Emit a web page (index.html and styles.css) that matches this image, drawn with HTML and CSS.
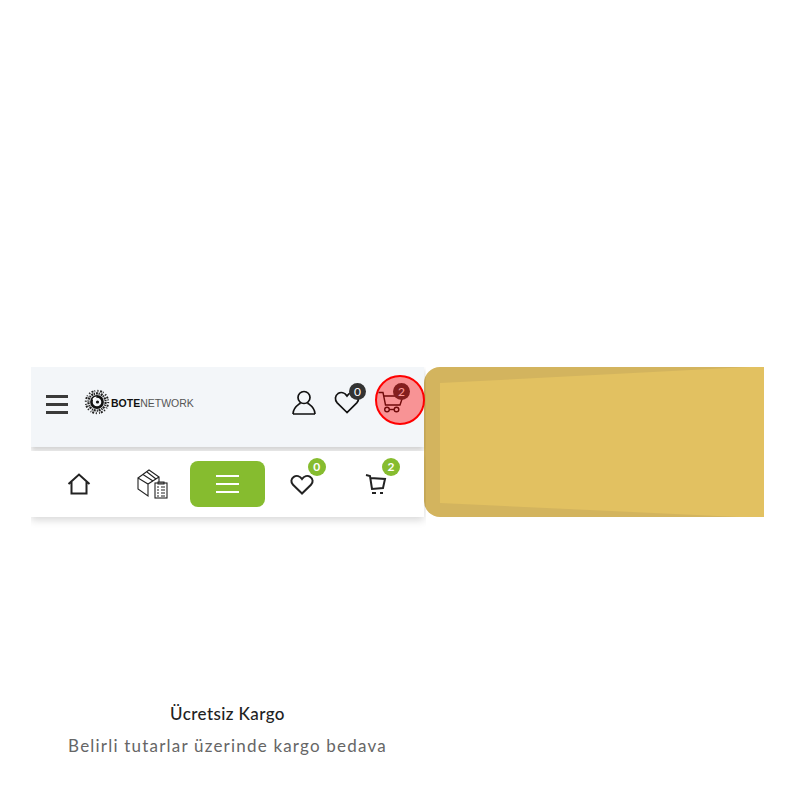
FILE: index.html
```html
<!DOCTYPE html>
<html lang="tr">
<head>
    <meta charset="UTF-8">
    <title>Botenetwork</title>
    <link rel="stylesheet" href="styles.css">
</head>
<body>
    <div class="stage">
        <div class="mobile-col">
            <div class="top-bar">
                <div class="burger"><span></span><span></span><span></span></div>
                <div class="logo">
                    <svg class="logo-mark" width="26" height="26" viewBox="0 0 26 26">
                        <circle cx="13" cy="13" r="11.2" fill="none" stroke="#222" stroke-width="2" stroke-dasharray="1.2 1.6 2 1 0.8 2.2"/>
                        <circle cx="13" cy="13" r="8.6" fill="none" stroke="#222" stroke-width="2.2" stroke-dasharray="2 0.7 1.2 1"/>
                        <circle cx="13" cy="13" r="5.6" fill="none" stroke="#111" stroke-width="2.6"/>
                        <circle cx="13.500" cy="13" r="1.600" fill="#111"/>
                        <path d="M8.500 10 C9.500 8 11.500 7.500 13 7.800 L11 10 L9.500 13 Z" fill="#fff"/>
                    </svg>
                    <span class="logo-text"><b>BOTE</b>NETWORK</span>
                </div>
                <div class="top-icons">
                    <a class="top-icon">
                        <svg width="24" height="25" viewBox="0 0 24 25" fill="none" stroke="#111" stroke-width="1.7">
                            <circle cx="12" cy="7.500" r="6"/>
                            <path d="M1 24 C1 17.500 6 15 8.500 13 M23 24 C23 17.500 18 15 15.500 13 M1 24 H23"/>
                        </svg>
                    </a>
                    <a class="top-icon">
                        <svg width="26" height="24" viewBox="0 0 26 24" fill="none" stroke="#111" stroke-width="1.7">
                            <path d="M13 22.500 L3.200 12.800 C0.500 10 1 5.500 4 3.600 C7 1.800 10.800 2.600 13 6 C15.200 2.600 19 1.800 22 3.600 C25 5.500 25.500 10 22.800 12.800 Z"/>
                        </svg>
                        <span class="count count-dark">0</span>
                    </a>
                    <a class="top-icon">
                        <svg width="26" height="24" viewBox="0 0 26 24" fill="none" stroke="#111" stroke-width="1.4">
                            <path d="M0.500 2.500 H5 L7.500 15 H22 L25 6 H6"/>
                            <circle cx="9" cy="19.500" r="2.300"/>
                            <circle cx="18.500" cy="19.500" r="2.300"/>
                            <path d="M11.300 19.500 H16.200"/>
                        </svg>
                        <span class="count count-dark">2</span>
                    </a>
                    <span class="click-mark"></span>
                </div>
            </div>
            <nav class="bottom-nav">
                <a class="nav-item">
                    <svg width="24" height="22" viewBox="0 0 24 22" fill="none" stroke="#222" stroke-width="2">
                        <path d="M1.500 11 L12 1.500 L22.500 11 M4.500 9 V20.500 H19.500 V9"/>
                    </svg>
                </a>
                <a class="nav-item">
                    <svg width="32" height="30" viewBox="0 0 32 30" fill="none" stroke="#222" stroke-width="1.100">
                        <path d="M1 9 L12 1 L22 8 L11 15 Z M1 9 V20 L11 27 V15 M22 8 V13"/>
                        <path d="M6 5.500 L16 12 M10 3 L19 10"/>
                        <rect x="18" y="14" width="12" height="15" fill="#fff"/>
                        <path d="M21 13 H27 V15 H21 Z M20 18 H22 M24 18 H28 M20 21 H22 M24 21 H28 M20 24 H22 M24 24 H28 M20 27 H22 M24 27 H28"/>
                    </svg>
                </a>
                <a class="nav-item menu-btn"><span></span><span></span><span></span></a>
                <a class="nav-item">
                    <svg width="24" height="21" viewBox="0 0 24 21" fill="none" stroke="#222" stroke-width="2">
                        <path d="M12 19.500 L3 10.800 C0.500 8.300 1 4.500 3.800 2.800 C6.500 1.200 10 2 12 5 C14 2 17.500 1.200 20.200 2.800 C23 4.500 23.500 8.300 21 10.800 Z"/>
                    </svg>
                    <span class="count count-green">0</span>
                </a>
                <a class="nav-item">
                    <svg width="22" height="22" viewBox="0 0 22 22" fill="none" stroke="#222" stroke-width="2">
                        <path d="M1 2 L5 3 L7 16 L18 15 L20 6 L5.300 5"/>
                        <path d="M7 20 H11 M15 20 H18"/>
                    </svg>
                    <span class="count count-green">2</span>
                </a>
            </nav>
        </div>
        <div class="banner">
            <svg class="banner-shape" viewBox="0 0 340 150" preserveAspectRatio="none">
                <polygon points="16,16 325,0 340,0 340,150 315,150 16,136" fill="#e2c161"/>
            </svg>
        </div>
    </div>

    <div class="feature">
        <h4>Ücretsiz Kargo</h4>
        <p>Belirli tutarlar üzerinde kargo bedava</p>
    </div>
</body>
</html>
```

FILE: styles.css
```css
body {
    margin: 0;
    background: #fff;
    font-family: Lato, "Open Sans", sans-serif;
    color: #222;
}

.stage {
    display: flex;
    margin: 367px 36px 0 31px;
    height: 150px;
}

.mobile-col {
    width: 393px;
    display: flex;
    flex-direction: column;
    clip-path: inset(0 -2px -20px 0);
}

.top-bar {
    height: 80px;
    padding: 0 0 10px 15px;
    box-sizing: border-box;
    display: flex;
    align-items: center;
    background: #f3f6f9;
    box-shadow: 0 3px 5px rgba(0,0,0,0.18);
}

.burger {
    display: flex;
    flex-direction: column;
    gap: 5px;
    width: 22px;
    margin-top: 5px;
}

.burger span {
    height: 3px;
    background: #3a3a3a;
}

.logo {
    display: flex;
    align-items: center;
    margin-left: 16px;
}

.logo-text {
    font-family: "Liberation Sans", Arial, sans-serif;
    font-size: 10.5px;
    color: #555;
    margin-left: 1px;
    margin-top: 1px;
}

.logo-text b {
    color: #111;
}

.top-icons {
    position: relative;
    display: flex;
    align-items: center;
    gap: 18px;
    margin-left: auto;
    margin-right: 20px;
}

.top-icon {
    position: relative;
    display: flex;
}

.count {
    position: absolute;
    width: 17px;
    height: 17px;
    border-radius: 50%;
    font-size: 12px;
    line-height: 17px;
    text-align: center;
}

.count-dark {
    top: -7px;
    right: -6px;
    background: #333;
    color: #fff;
}

.count-green {
    left: 50%;
    margin-left: 6px;
    width: 18px;
    height: 18px;
    line-height: 18px;
    background: #86bc2f;
    color: #fff;
    font-weight: 700;
}

.click-mark {
    position: absolute;
    top: -15px;
    right: -21px;
    width: 46px;
    height: 46px;
    border: 2px solid #f00;
    border-radius: 50%;
    background: rgba(255,0,0,0.4);
}

.bottom-nav {
    height: 66px;
    margin-top: 4px;
    padding: 10px 11px;
    box-sizing: border-box;
    display: grid;
    grid-template-columns: repeat(5, 1fr);
    background: #fff;
    box-shadow: 0 3px 8px rgba(0,0,0,0.16);
    position: relative;
}

.nav-item {
    display: flex;
    align-items: center;
    justify-content: center;
    position: relative;
}

.nav-item .count-green {
    top: -3px;
}

.menu-btn {
    flex-direction: column;
    gap: 6px;
    background: #86bc2f;
    border-radius: 8px;
}

.menu-btn span {
    width: 23px;
    height: 2px;
    background: #fff;
}

.banner {
    width: 340px;
    background: #d3b45e;
    border-radius: 16px 0 0 16px;
    overflow: hidden;
}

.banner-shape {
    display: block;
    width: 100%;
    height: 100%;
}

.feature {
    width: 393px;
    margin: 186px 0 0 31px;
    text-align: center;
}

.feature h4 {
    margin: 0;
    font-size: 17px;
    font-weight: 500;
    line-height: 22px;
    letter-spacing: 0.4px;
    color: #222;
}

.feature p {
    margin: 10px 0 0;
    font-size: 17px;
    line-height: 22px;
    letter-spacing: 1.2px;
    color: #666;
}
```
